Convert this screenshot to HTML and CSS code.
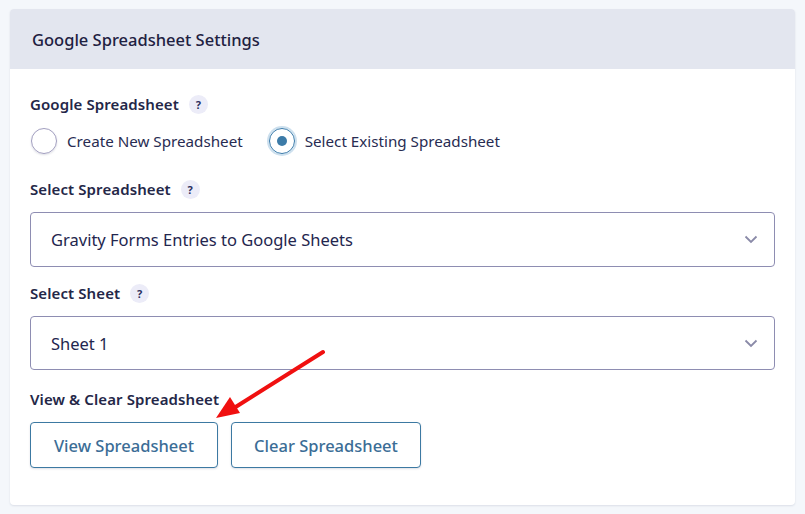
FILE: index.html
```html
<!DOCTYPE html>
<html>
<head>
<meta charset="utf-8">
<link rel="stylesheet" href="styles.css">
</head>
<body>
<div class="card">
  <div class="card-header">Google Spreadsheet Settings</div>
  <div class="card-body">
    <div class="field first">
      <div class="label">Google Spreadsheet <span class="help">?</span></div>
      <div class="radios">
        <label class="radio"><span class="circle"></span>Create New Spreadsheet</label>
        <label class="radio checked"><span class="circle"><span class="dot"></span></span>Select Existing Spreadsheet</label>
      </div>
    </div>
    <div class="field second">
      <div class="label">Select Spreadsheet <span class="help">?</span></div>
      <div class="select">
        <span>Gravity Forms Entries to Google Sheets</span>
        <svg class="chev" width="14" height="9" viewBox="0 0 14 9"><path d="M1.5 1.5 L7 7 L12.5 1.5" fill="none" stroke="#8a8aa8" stroke-width="1.8"/></svg>
      </div>
    </div>
    <div class="field">
      <div class="label">Select Sheet <span class="help">?</span></div>
      <div class="select short">
        <span>Sheet 1</span>
        <svg class="chev" width="14" height="9" viewBox="0 0 14 9"><path d="M1.5 1.5 L7 7 L12.5 1.5" fill="none" stroke="#8a8aa8" stroke-width="1.8"/></svg>
      </div>
    </div>
    <div class="field last">
      <div class="label">View &amp; Clear Spreadsheet</div>
      <div class="buttons">
        <button class="btn view">View Spreadsheet</button>
        <button class="btn clear">Clear Spreadsheet</button>
      </div>
    </div>
  </div>
</div>
<svg class="arrow" width="805" height="514" viewBox="0 0 805 514">
  <line x1="323" y1="352" x2="234" y2="408" stroke="#f01010" stroke-width="4" stroke-linecap="round"/>
  <polygon points="216,418 230,397 240,413" fill="#f01010"/>
</svg>
</body>
</html>
```
FILE: styles.css
```css
html, body {
  margin: 0;
  padding: 0;
}
body {
  background: #f4f7fb;
  font-family: "Noto Sans", "Open Sans", sans-serif;
  color: #242748;
  width: 805px;
  height: 514px;
  overflow: hidden;
  position: relative;
}
.card {
  margin: 9px 10px 0 10px;
  width: 785px;
  height: 496px;
  background: #fff;
  border-radius: 4px;
  box-shadow: 0 1px 2px rgba(40, 50, 90, 0.12);
  overflow: hidden;
  box-sizing: border-box;
}
.card-header {
  height: 60px;
  background: #e3e6ef;
  display: flex;
  align-items: center;
  padding-left: 22px;
  font-size: 16.5px;
  font-weight: 500;
  color: #1e2141;
}
.card-body {
  padding: 24px 20px 0 20px;
}
.field {
  margin-bottom: 18px;
}
.field.first {
  margin-bottom: 22px;
}
.field.second {
  margin-bottom: 15px;
}
.label {
  display: flex;
  align-items: center;
  font-size: 15px;
  font-weight: 600;
  height: 22px;
  letter-spacing: 0.1px;
}
.help {
  display: inline-flex;
  align-items: center;
  justify-content: center;
  width: 19px;
  height: 19px;
  border-radius: 50%;
  background: #ececf8;
  font-size: 11px;
  font-weight: 700;
  margin-left: 10px;
  color: #2a2f5e;
}
.radios {
  display: flex;
  gap: 25px;
  margin-top: 11px;
  height: 30px;
  align-items: center;
}
.radio {
  display: flex;
  align-items: center;
  font-size: 15.2px;
  color: #282c52;
}
.circle {
  width: 26px;
  height: 26px;
  border: 1.5px solid #a19ebf;
  border-radius: 50%;
  box-sizing: border-box;
  margin-right: 10px;
  margin-left: 1px;
  display: flex;
  align-items: center;
  justify-content: center;
  box-shadow: 0 1px 2px rgba(40, 50, 90, 0.15);
}
.radio.checked .circle {
  border-color: #3b7bab;
  box-shadow: 0 0 0 2px #cde0ee;
  margin-right: 10px;
}
.dot {
  width: 10px;
  height: 10px;
  border-radius: 50%;
  background: #3c7ba8;
}
.select {
  margin-top: 12px;
  height: 55px;
  border: 1px solid #8e8db2;
  border-radius: 4px;
  box-sizing: border-box;
  display: flex;
  align-items: center;
  justify-content: space-between;
  padding: 0 16px 0 20px;
  font-size: 16.5px;
  color: #23264e;
}
.select.short {
  height: 54px;
}
.chev {
  display: block;
}
.buttons {
  display: flex;
  gap: 13px;
  margin-top: 12px;
}
.btn {
  height: 46px;
  border: 1px solid #3c79a2;
  border-radius: 4px;
  background: #fff;
  color: #3b6d96;
  font-family: "Noto Sans", "Open Sans", sans-serif;
  font-size: 16.5px;
  font-weight: 500;
  padding: 0;
  box-shadow: 0 1px 2px rgba(40, 50, 90, 0.15);
}
.btn.view { width: 188px; }
.btn.clear { width: 190px; }
.arrow {
  position: absolute;
  left: 0;
  top: 0;
  pointer-events: none;
}
```
